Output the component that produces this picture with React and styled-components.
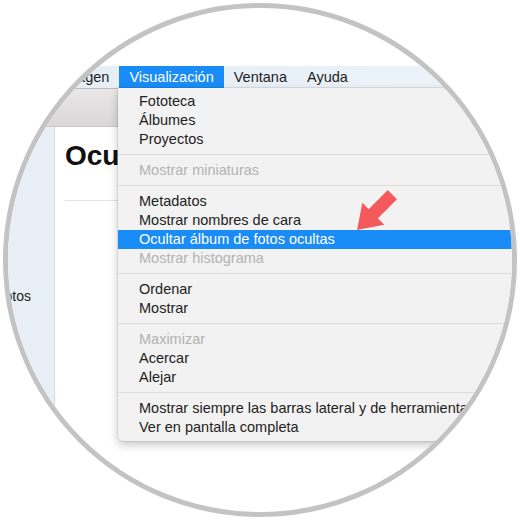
import styled, { createGlobalStyle } from "styled-components"

const GlobalStyle = createGlobalStyle`
    body{
        margin:0;
        background:#fff;
        font-family:"Liberation Sans", "Noto Sans", sans-serif;
    }
`;

const sections = [
    [
        { label: "Fototeca" },
        { label: "Álbumes" },
        { label: "Proyectos" },
    ],
    [{ label: "Mostrar miniaturas", disabled: true }],
    [
        { label: "Metadatos" },
        { label: "Mostrar nombres de cara" },
        { label: "Ocultar álbum de fotos ocultas", active: true },
        { label: "Mostrar histograma", disabled: true },
    ],
    [{ label: "Ordenar" }, { label: "Mostrar" }],
    [
        { label: "Maximizar", disabled: true },
        { label: "Acercar" },
        { label: "Alejar" },
    ],
    [
        { label: "Mostrar siempre las barras lateral y de herramientas" },
        { label: "Ver en pantalla completa" },
    ],
];

const App = () => {
    return (
        <Page>
            <GlobalStyle />
            <Lens>
                <TopSpace />
                <MenuBar>
                    <MenuTitle>Imagen</MenuTitle>
                    <MenuTitle $open>Visualización</MenuTitle>
                    <MenuTitle>Ventana</MenuTitle>
                    <MenuTitle>Ayuda</MenuTitle>
                </MenuBar>
                <Toolbar />
                <Body>
                    <Sidebar>
                        <SideItem>Fotos</SideItem>
                    </Sidebar>
                    <Content>
                        <Heading>Ocultar</Heading>
                        <Rule />
                    </Content>
                </Body>
                <Dropdown>
                    {sections.map((items, i) => (
                        <Section key={i} $first={i === 0}>
                            {items.map((item) => (
                                <Item
                                    key={item.label}
                                    $disabled={item.disabled}
                                    $active={item.active}
                                >
                                    {item.label}
                                </Item>
                            ))}
                        </Section>
                    ))}
                </Dropdown>
                <Arrow viewBox="0 0 520 520">
                    <g transform="translate(392.4 194.6) rotate(135)" fill="#f45a5c">
                        <rect x="0" y="-6.5" width="30" height="13" />
                        <polygon points="27,-15.5 50,0 27,15.5" />
                    </g>
                </Arrow>
            </Lens>
        </Page>
    )
}

const Page = styled.div`
    width:520px;
    height:520px;
    padding:3px;
    box-sizing:border-box;
    background:#fff;
`;

const Lens = styled.div`
    position:relative;
    width:514px;
    height:514px;
    box-sizing:border-box;
    border:5px solid #c3c3c3;
    border-radius:50%;
    overflow:hidden;
    background:#fff;
    display:flex;
    flex-direction:column;
`;

const TopSpace = styled.div`
    height:58px;
    flex:none;
`;

const MenuBar = styled.div`
    height:22px;
    flex:none;
    display:flex;
    align-items:stretch;
    padding-left:43px;
    background:linear-gradient(to right, #e6edf5, #e9f0f7 60%, #eef4fa);
    border-bottom:1px solid #b9bcc0;
`;

const MenuTitle = styled.div`
    display:flex;
    align-items:center;
    padding:0 10px;
    font-size:14.5px;
    white-space:nowrap;
    color:${(p) => (p.$open ? "#fff" : "#1e1e1e")};
    background:${(p) => (p.$open ? "#1a8cf7" : "transparent")};
`;

const Toolbar = styled.div`
    height:37px;
    flex:none;
    background:linear-gradient(#e9e7e7, #d9d7d7);
    border-bottom:1px solid #c8c8c8;
`;

const Body = styled.div`
    flex:1;
    display:flex;
`;

const Sidebar = styled.div`
    width:46px;
    flex:none;
    background:#e9eff6;
    border-right:1px solid #d3dae2;
    padding-top:161px;
`;

const SideItem = styled.div`
    font-size:14px;
    color:#222;
    margin-left:-12px;
`;

const Content = styled.div`
    width:63px;
    flex:none;
    overflow:hidden;
    padding:13px 0 0 10px;
`;

const Heading = styled.div`
    font-size:28px;
    font-weight:bold;
    color:#111;
    line-height:32px;
    white-space:nowrap;
`;

const Rule = styled.div`
    margin-top:28px;
    height:1px;
    background:#e4e4e4;
`;

const Dropdown = styled.div`
    position:absolute;
    left:110px;
    top:80px;
    width:420px;
    padding:4px 0 4px;
    background:#f2f2f2;
    border-radius:0 0 5px 5px;
    box-shadow:0 4px 10px rgba(0,0,0,0.22), 0 0 0 1px rgba(0,0,0,0.08);
`;

const Section = styled.div`
    display:flex;
    flex-direction:column;
    ${(p) => !p.$first && `
        margin-top:5px;
        padding-top:6px;
        border-top:1px solid #dcdcdc;
    `}
`;

const Item = styled.div`
    height:19px;
    line-height:19px;
    padding-left:21px;
    font-size:14.5px;
    white-space:nowrap;
    color:${(p) => (p.$active ? "#fff" : p.$disabled ? "#b3b3b3" : "#222")};
    background:${(p) => (p.$active ? "#1a8cf7" : "transparent")};
`;

const Arrow = styled.svg`
    position:absolute;
    left:-8px;
    top:-8px;
    width:520px;
    height:520px;
    pointer-events:none;
`;

export default App;
